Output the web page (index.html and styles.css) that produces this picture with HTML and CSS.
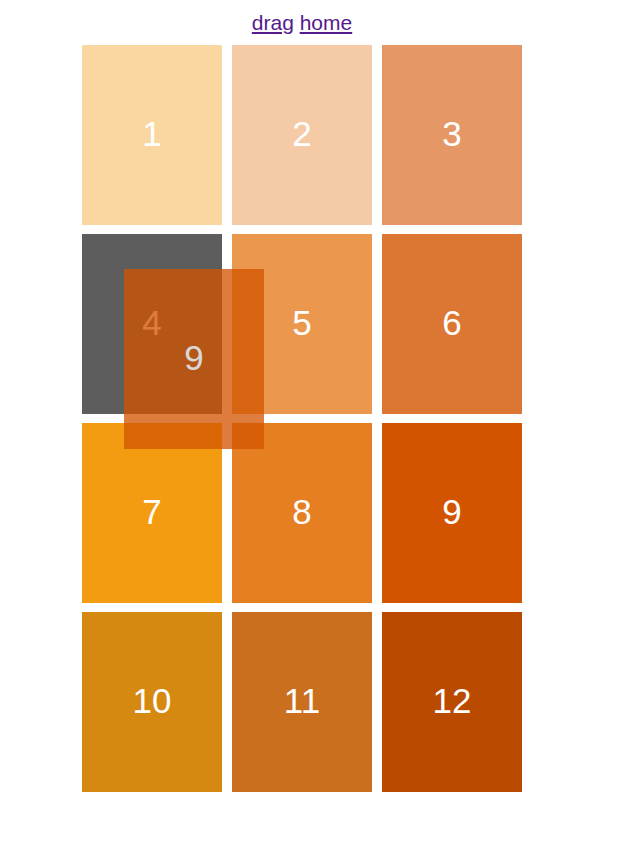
FILE: index.html
```html
<!DOCTYPE html>
<html>
<head>
<meta charset="utf-8">
<link rel="stylesheet" href="styles.css">
</head>
<body>
<div class="page">
  <nav class="nav"><a href="#drag" class="link">drag</a> <a href="#home" class="link">home</a></nav>
  <div class="grid">
    <div class="tile c1">1</div>
    <div class="tile c2">2</div>
    <div class="tile c3">3</div>
    <div class="tile placeholder">4</div>
    <div class="tile c5">5</div>
    <div class="tile c6">6</div>
    <div class="tile c7">7</div>
    <div class="tile c8">8</div>
    <div class="tile c9">9</div>
    <div class="tile c10">10</div>
    <div class="tile c11">11</div>
    <div class="tile c12">12</div>
  </div>
  <div class="tile c9 dragging">9</div>
</div>
</body>
</html>
```
FILE: styles.css
```css
html, body {
  margin: 0;
  padding: 0;
  background: #fff;
}
.page {
  position: relative;
  width: 604px;
  font-family: "Liberation Sans", Arial, sans-serif;
  padding-top: 11px;
}
.nav {
  text-align: center;
  font-size: 21px;
  line-height: 24px;
  height: 24px;
}
.link {
  color: #551a8b;
  text-decoration: underline;
}
.grid {
  margin: 10px auto 0;
  width: 440px;
  display: grid;
  grid-template-columns: repeat(3, 140px);
  grid-auto-rows: 180px;
  column-gap: 10px;
  row-gap: 9px;
}
.tile {
  width: 140px;
  height: 180px;
  display: flex;
  align-items: center;
  justify-content: center;
  color: #fff;
  font-size: 35px;
  padding-bottom: 2px;
  box-sizing: border-box;
}
.c1 { background: #fad7a0; }
.c2 { background: #f5cba7; }
.c3 { background: #e59866; }
.placeholder { background: #5d5d5d; }
.c5 { background: #eb984e; }
.c6 { background: #dc7633; }
.c7 { background: #f39c12; }
.c8 { background: #e67e22; }
.c9 { background: #d35400; }
.c10 { background: #d68910; }
.c11 { background: #ca6f1e; }
.c12 { background: #ba4a00; }
.dragging {
  position: absolute;
  left: 124px;
  top: 269px;
  opacity: 0.76;
}
```
